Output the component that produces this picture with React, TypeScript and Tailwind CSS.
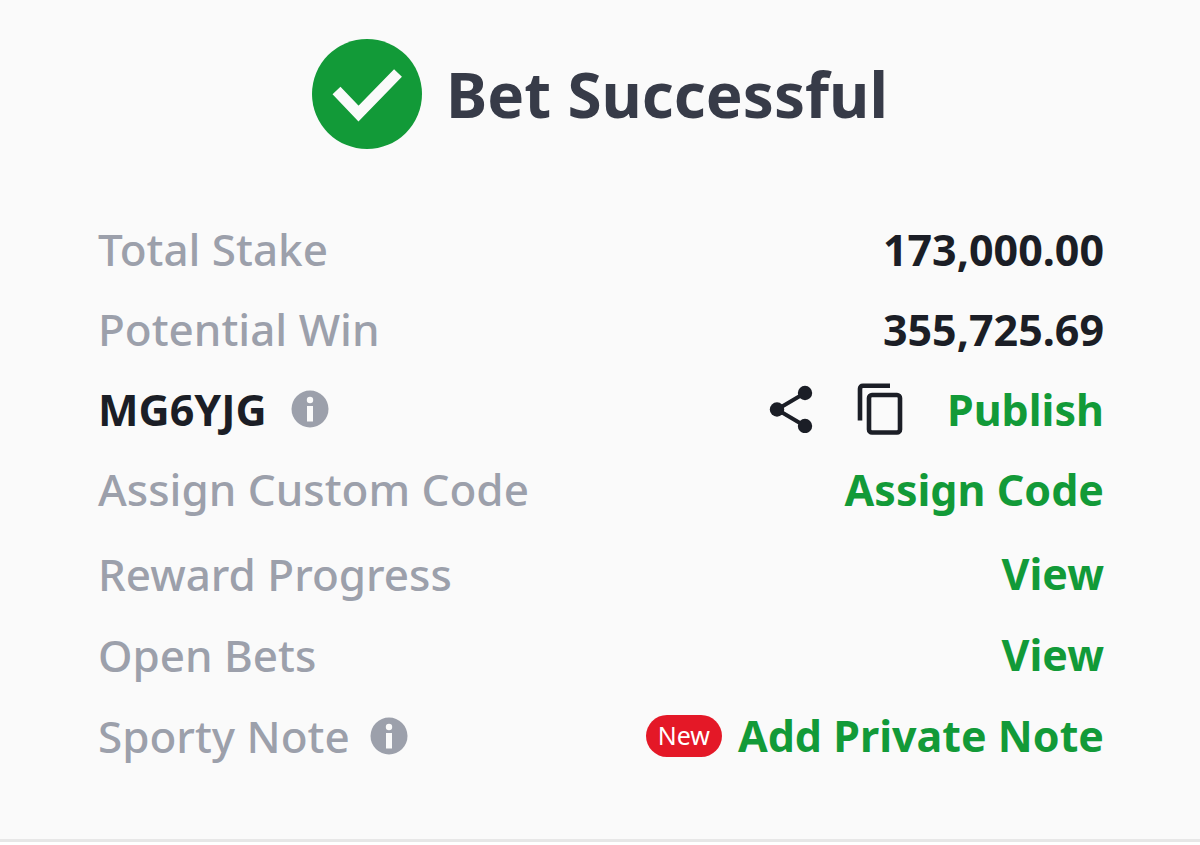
import React from 'react';

const InfoIcon: React.FC = () => (
  <svg viewBox="0 0 38 38" className="w-[38px] h-[38px]" aria-hidden="true">
    <circle cx="19" cy="19" r="18.5" fill="#9ca0ab" />
    <circle cx="19" cy="10" r="3.2" fill="#fafafa" />
    <rect x="16" y="16" width="6" height="15.5" fill="#fafafa" />
  </svg>
);

const ShareIcon: React.FC = () => (
  <svg viewBox="0 0 44 48" className="w-11 h-12" aria-hidden="true">
    <path d="M36 8 L8 24.5 L36 41" fill="none" stroke="#1b1e26" strokeWidth="4" />
    <circle cx="36" cy="8" r="7.2" fill="#1b1e26" />
    <circle cx="8" cy="24.5" r="7.2" fill="#1b1e26" />
    <circle cx="36" cy="41" r="7.2" fill="#1b1e26" />
  </svg>
);

const CopyIcon: React.FC = () => (
  <svg viewBox="0 0 46 52" className="w-[46px] h-[52px]" fill="none" stroke="#1b1e26" strokeWidth="4.6" aria-hidden="true">
    <path d="M33 2.8 H6 Q3 2.8 3 5.8 V37.5" />
    <rect x="12" y="12" width="31" height="37.5" rx="3" />
  </svg>
);

const label = 'text-[44px] font-medium whitespace-nowrap';
const value = 'text-[43px] font-bold text-[#1b1e26] whitespace-nowrap';
const action = 'text-[43px] font-bold text-[#129a38] whitespace-nowrap';

const App: React.FC = () => {
  return (
    <main className="bg-[#fafafa] border-b-3 border-[#e7e7e7] pt-[39px] pb-[63px] font-['Noto_Sans',sans-serif] leading-none text-[#9ca0ab]">
      <header className="flex items-center justify-center gap-6">
        <svg viewBox="0 0 110 110" className="w-[110px] h-[110px]" aria-hidden="true">
          <circle cx="55" cy="55" r="55" fill="#129a38" />
          <path d="M24.5 51.5 L46.5 74.5 L86 34" fill="none" stroke="#fafafa" strokeWidth="11" />
        </svg>
        <h1 className="text-[62px] font-bold text-[#373b48]">Bet Successful</h1>
      </header>

      <section className="mt-[60px] pl-[98px] pr-24">
        {/* Ticket */}
        <div className="flex h-20 items-center justify-between">
          <span className={label}>Total Stake</span>
          <span className={value}>173,000.00</span>
        </div>
        <div className="flex h-20 items-center justify-between">
          <span className={label}>Potential Win</span>
          <span className={value}>355,725.69</span>
        </div>
        <div className="flex h-20 items-center justify-between">
          <div className="flex items-center gap-6">
            <span className={value}>MG6YJG</span>
            <button type="button" aria-label="About booking code"><InfoIcon /></button>
          </div>
          <div className="flex items-center gap-11">
            <button type="button" aria-label="Share"><ShareIcon /></button>
            <button type="button" aria-label="Copy code"><CopyIcon /></button>
            <button type="button" className={action}>Publish</button>
          </div>
        </div>
        <div className="flex h-20 items-center justify-between">
          <span className={label}>Assign Custom Code</span>
          <button type="button" className={action}>Assign Code</button>
        </div>

        {/* Extras */}
        <div className="mt-1 flex h-[81px] items-center justify-between">
          <span className={label}>Reward Progress</span>
          <a href="#rewards" className={action}>View</a>
        </div>
        <div className="flex h-[81px] items-center justify-between">
          <span className={label}>Open Bets</span>
          <a href="#open-bets" className={action}>View</a>
        </div>
        <div className="flex h-[81px] items-center justify-between">
          <div className="flex items-center gap-5">
            <span className={label}>Sporty Note</span>
            <button type="button" aria-label="About Sporty Note"><InfoIcon /></button>
          </div>
          <div className="flex items-center gap-4">
            <span className="flex h-[42px] items-center rounded-full bg-[#e41827] px-3 text-[25px] leading-none text-white">New</span>
            <button type="button" className={action}>Add Private Note</button>
          </div>
        </div>
      </section>
    </main>
  );
};

export default App;
